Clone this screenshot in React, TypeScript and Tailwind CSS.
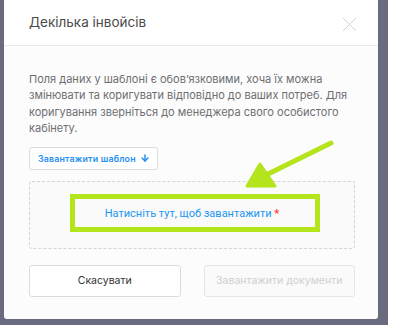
import { ArrowDown } from "lucide-react";

export default function App() {
  return (
    <div className="w-[400px] h-[331px] bg-white relative overflow-hidden" style={{ fontFamily: "Inter, 'Noto Sans', sans-serif" }}>
      <div className="w-[388px] h-[325px] bg-[#6b6b80] pl-[4px]">
        <div className="w-[374px] h-[319px] bg-[#fcfcfc] flex flex-col rounded-b-[3px]">
          <div className="h-[46px] shrink-0 bg-white border-b border-[#e9e9ec] flex items-center justify-between pl-[25px] pr-[21px]">
            <span className="text-[13.5px] text-[#4a4a4a]">Декілька інвойсів</span>
            <svg width="15" height="15" viewBox="0 0 15 15" className="text-[#d2d2d6] mt-[3px]">
              <path d="M1 1 L14 14 M14 1 L1 14" stroke="currentColor" strokeWidth="1" fill="none" />
            </svg>
          </div>

          <div className="flex flex-col pl-[25px] pr-[23px] pt-[25px]">
            <p className="text-[11px] leading-[16.4px] text-[#6e6e72] whitespace-nowrap">
              Поля даних у шаблоні є обовʼязковими, хоча їх можна
              <br />
              змінювати та коригувати відповідно до ваших потреб. Для
              <br />
              коригування зверніться до менеджера свого особистого
              <br />
              кабінету.
            </p>

            <button className="mt-[10px] self-start h-[23px] pl-[8px] pr-[7px] flex items-center gap-[4px] bg-white border border-[#dcdce0] rounded-[3px] text-[8.8px] font-semibold text-[#1e8ef0] tracking-[0.2px]">
              Завантажити шаблон
              <ArrowDown className="w-[10px] h-[10px]" strokeWidth={3.5} />
            </button>

            <div className="mt-[11px] h-[68px] relative border border-dashed border-[#d4d4d8] rounded-[3px] bg-[#fafafa] flex items-center justify-center">
              <span className="text-[11px] text-[#2196f3]" style={{ fontFamily: "Roboto, sans-serif" }}>
                Натисніть тут, щоб завантажити <span className="text-[#ff3b3b] font-bold">*</span>
              </span>
              <div className="absolute left-[40px] right-[34px] top-[12px] bottom-[16px] border-[5px] border-[#b4e41c]" />
            </div>

            <div className="mt-[16px] grid grid-cols-2 gap-[23px]">
              <button className="h-[32px] bg-white border border-[#dcdce0] rounded-[3px] text-[10.5px] text-[#333]">
                Скасувати
              </button>
              <button className="h-[32px] bg-[#fafafa] border border-[#e6e6e9] rounded-[3px] text-[10.5px] text-[#cfcfd3]">
                Завантажити документи
              </button>
            </div>
          </div>
        </div>
      </div>

      <svg className="absolute left-0 top-0 pointer-events-none" width="400" height="331" viewBox="0 0 400 331">
        <line x1="331" y1="143" x2="266" y2="175" stroke="#b4e41c" strokeWidth="5" strokeLinecap="round" />
        <polygon points="260,164 247,186 275,186" fill="#b4e41c" stroke="#b4e41c" strokeWidth="3" strokeLinejoin="round" />
      </svg>
    </div>
  );
}
